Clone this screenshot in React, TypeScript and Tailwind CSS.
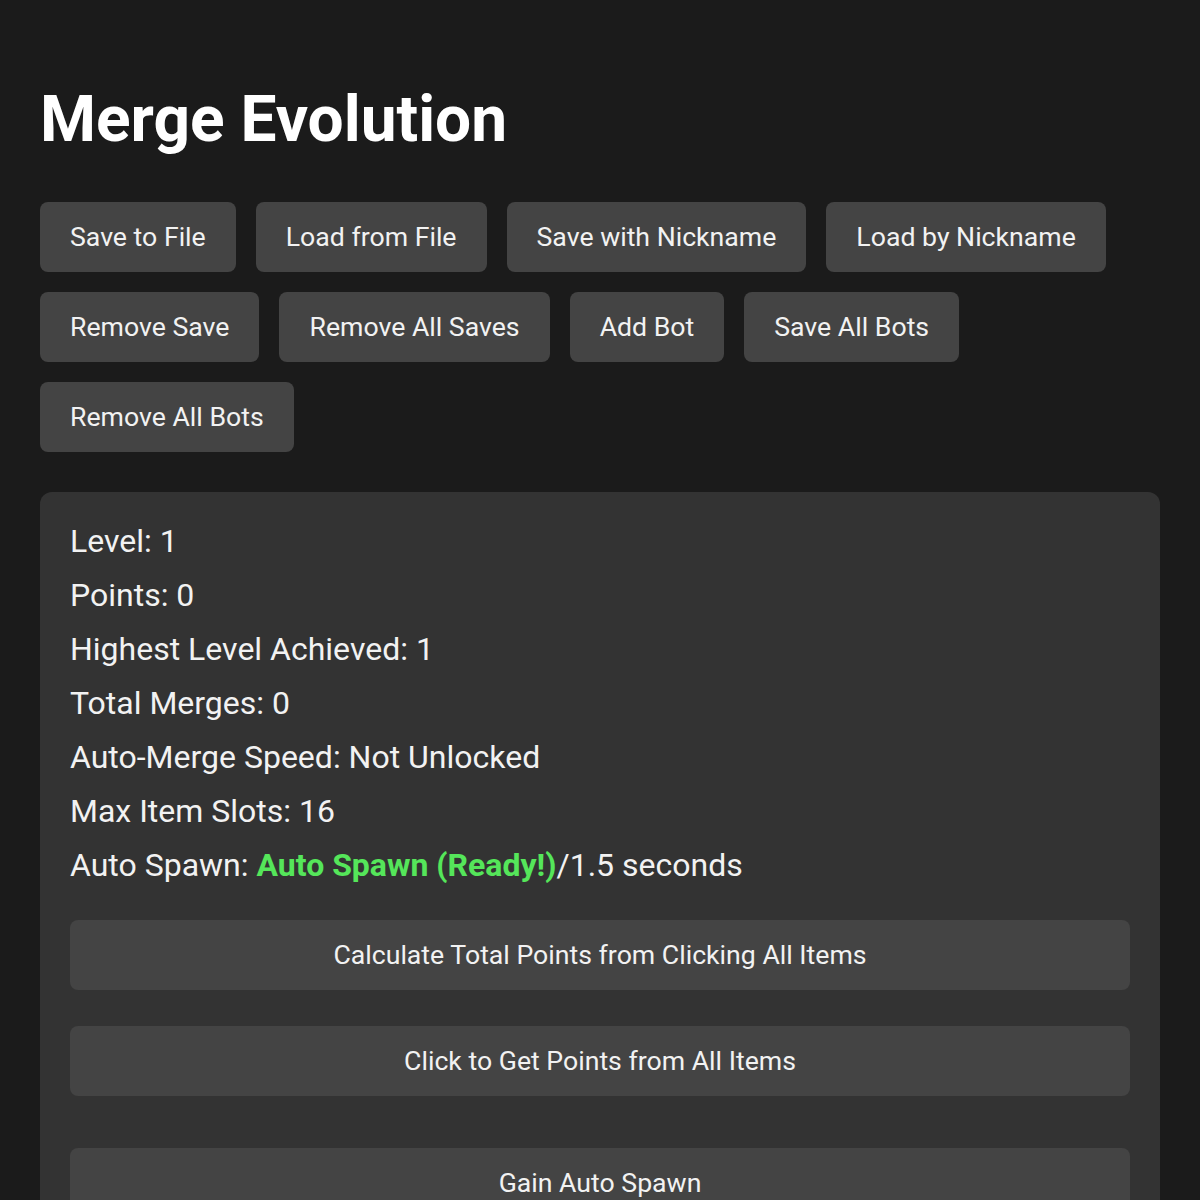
import React from "react";

const topButtons = [
  ["Save to File", "Load from File", "Save with Nickname", "Load by Nickname"],
  ["Remove Save", "Remove All Saves", "Add Bot", "Save All Bots"],
  ["Remove All Bots"],
];

const stats: [string, string][] = [
  ["Level", "1"],
  ["Points", "0"],
  ["Highest Level Achieved", "1"],
  ["Total Merges", "0"],
  ["Auto-Merge Speed", "Not Unlocked"],
  ["Max Item Slots", "16"],
];

export default function App() {
  return (
    <div
      className="min-h-[1200px] bg-[#1b1b1b] text-white px-10 pt-[80px]"
      style={{ fontFamily: "Roboto, 'Noto Sans', sans-serif" }}
    >
      <h1 className="text-[64px] font-bold leading-[80px] mb-[42px]">Merge Evolution</h1>

      <div className="flex flex-col gap-5">
        {topButtons.map((row, i) => (
          <div key={i} className="flex gap-5">
            {row.map((b) => (
              <button
                key={b}
                className="h-[70px] px-[30px] rounded-lg bg-[#444444] text-[26.67px] text-[#f2f2f2]"
              >
                {b}
              </button>
            ))}
          </div>
        ))}
      </div>

      <div className="mt-10 rounded-xl bg-[#333333] px-[30px] pt-[22px] pb-10">
        <div className="text-[32px] leading-[54px] text-[#f2f2f2]">
          {stats.map(([k, v]) => (
            <div key={k}>
              {k}: {v}
            </div>
          ))}
          <div>
            Auto Spawn: <span className="font-bold text-[#55e65a]">Auto Spawn (Ready!)</span>/1.5 seconds
          </div>
        </div>

        <button className="mt-[28px] w-full h-[70px] rounded-lg bg-[#444444] text-[26.67px] text-[#f2f2f2]">
          Calculate Total Points from Clicking All Items
        </button>
        <button className="mt-[36px] w-full h-[70px] rounded-lg bg-[#444444] text-[26.67px] text-[#f2f2f2]">
          Click to Get Points from All Items
        </button>
        <button className="mt-[52px] w-full h-[70px] rounded-lg bg-[#444444] text-[26.67px] text-[#f2f2f2]">
          Gain Auto Spawn
        </button>
      </div>
    </div>
  );
}
